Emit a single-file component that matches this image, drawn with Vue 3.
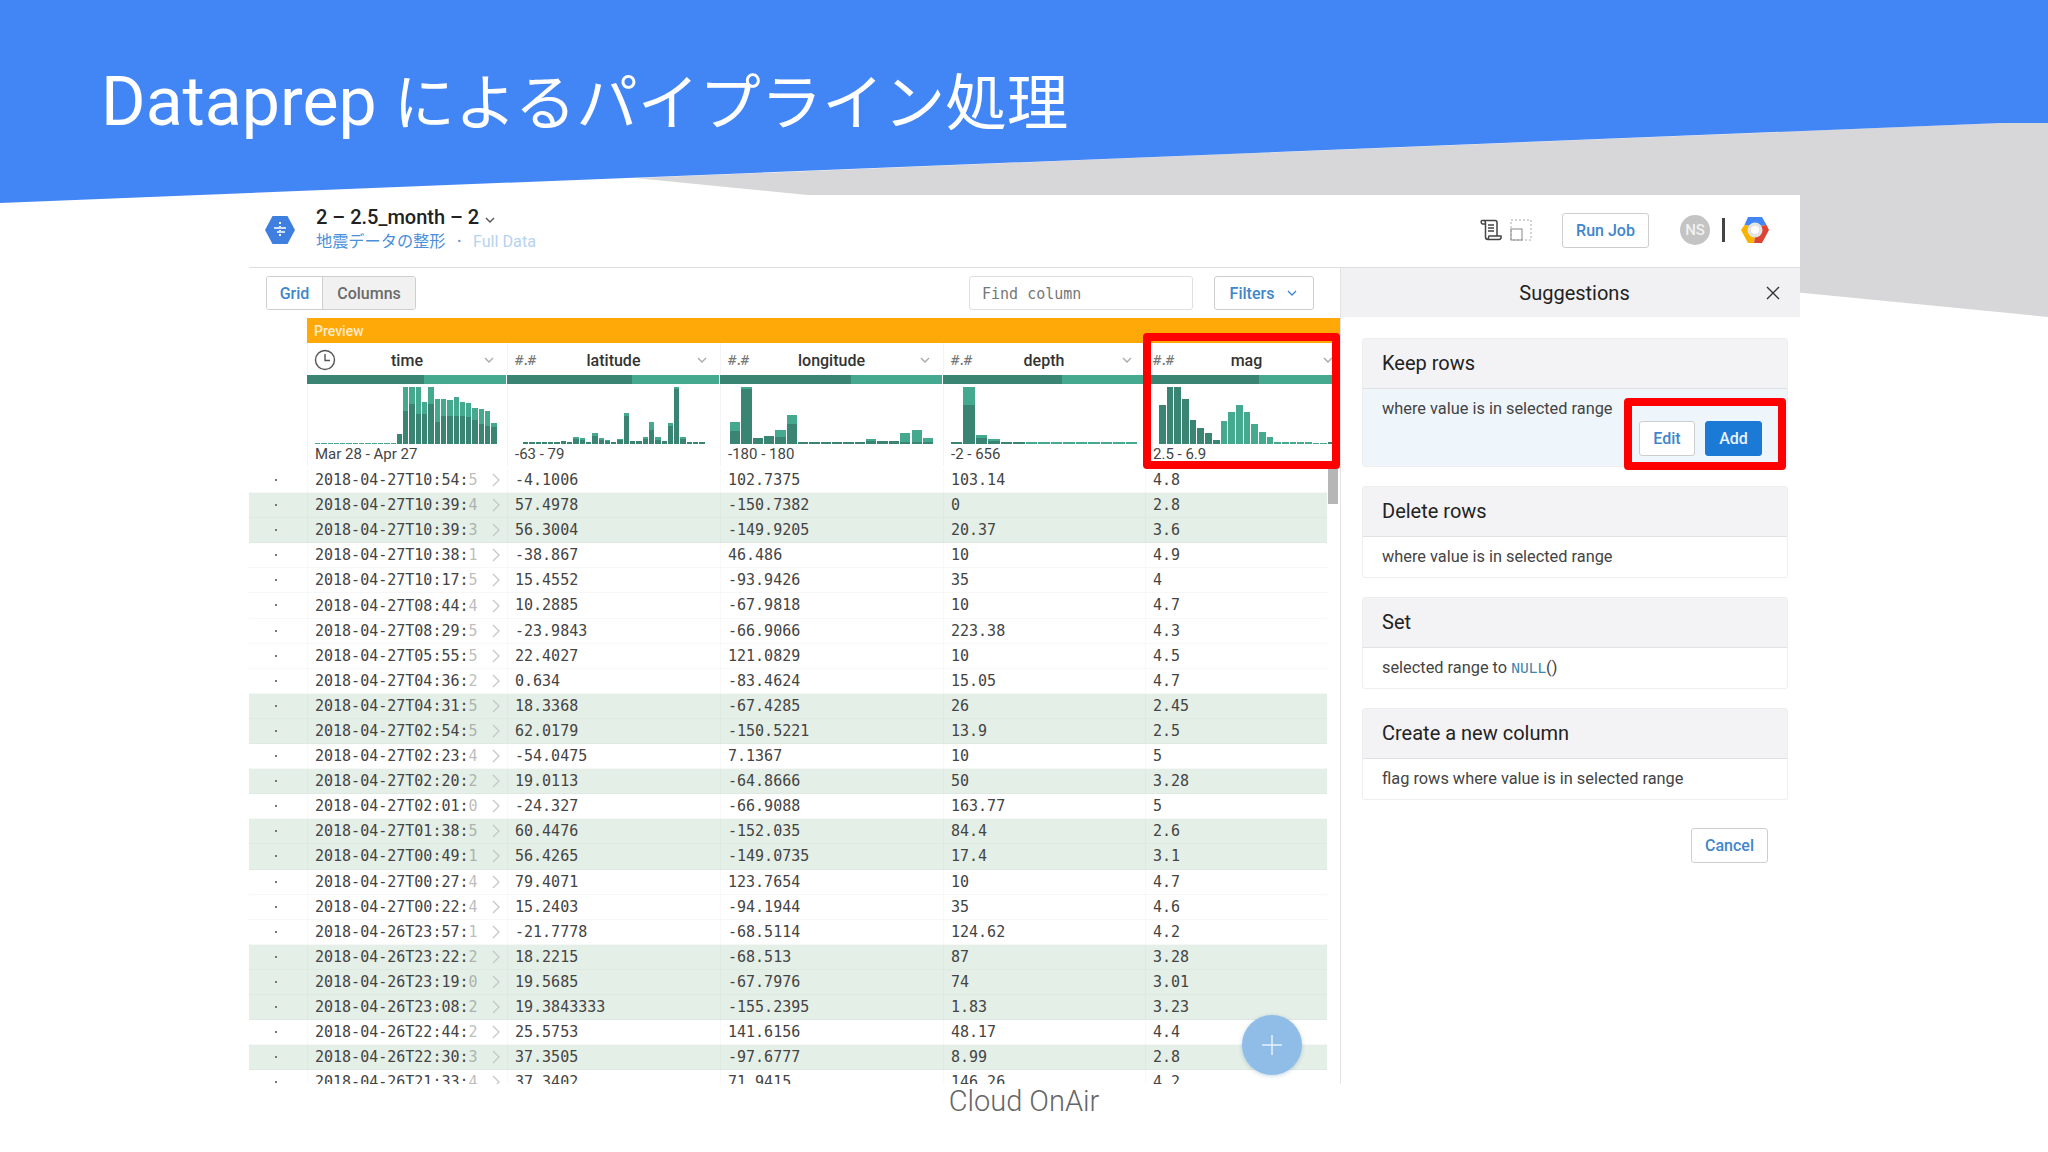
<template>
  <div class="slide">
    <svg class="backdrop" width="2048" height="1152" viewBox="0 0 2048 1152">
      <polygon points="635,178 2001,123 2048,123 2048,317" fill="#d7d7d9" />
      <polygon points="0,0 2048,0 2048,123 2001,123 0,203" fill="#4285f4" />
    </svg>

    <div class="band">
      <h1 class="slide-title"><span class="title-latin">Dataprep</span> <span class="title-ja">によるパイプライン処理</span></h1>
    </div>

    <div class="app">
      <!-- top bar -->
      <header class="topbar">
        <svg class="logo" width="30" height="28" viewBox="0 0 30 28">
          <polygon points="7.5,0 22.5,0 30,14 22.5,28 7.5,28 0,14" fill="#3f7fe0" />
          <path d="M15 6v16" stroke="#fff" stroke-width="2" stroke-dasharray="2 2" />
          <path d="M9 12h12M12 16h8" stroke="#cfe0fa" stroke-width="2" />
        </svg>
        <div class="names">
          <div class="flow-name">
            2 – 2.5_month – 2
            <svg width="12" height="8" viewBox="0 0 12 8"><path d="M2 2l4 4 4-4" class="chev" /></svg>
          </div>
          <div class="flow-sub">
            <span class="sub-link">地震データの整形</span>
            <span class="sub-dot">•</span>
            <span class="sub-scope">Full Data</span>
          </div>
        </div>
        <div class="top-actions">
          <svg width="22" height="22" viewBox="0 0 22 22" fill="none" stroke="#444" stroke-width="1.5">
            <path d="M2 1.5h13c1.5 0 2 1 2 2V17" />
            <path d="M2 1.5C.8 1.5.8 5 2.5 5H5" />
            <path d="M4 1.5c1.5 0 1.500 1.500 1.500 3V18c0 1.500 1 2.500 2.500 2.500h11c1.500 0 2.500-1.500 2-3.500H9c-.5 1-.5 2.500-1 3.500" />
            <path d="M8 6h6M8 9h6M8 12h6" />
          </svg>
          <svg class="frame-icon" width="22" height="22" viewBox="0 0 22 22" fill="none">
            <rect x="1" y="1" width="20" height="20" stroke="#aaa" stroke-dasharray="2 2" />
            <rect x="1" y="10" width="11" height="11" stroke="#888" />
          </svg>
          <button class="btn run-btn">Run Job</button>
          <div class="avatar">NS</div>
          <div class="divider"></div>
          <svg width="30" height="30" viewBox="0 0 30 30">
            <polygon points="8,2 22,2 26.500,10 20,11 15,8 10,11 4.500,10" fill="#4285f4" />
            <polygon points="4.500,10 10,11 9,18 15,22 14,28 8,28 1,15" fill="#f4b400" />
            <polygon points="26.500,10 29,15 22,28 14,28 15,22 21,18 20,11" fill="#db4437" />
            <circle cx="15" cy="15" r="7.500" fill="#e4e4e4" />
            <circle cx="15" cy="15" r="4" fill="#fff" />
          </svg>
        </div>
      </header>

      <div class="workspace">
        <!-- data grid -->
        <section class="grid-pane">
          <div class="toolbar">
            <div class="tabs">
              <button class="tab tab-on">Grid</button>
              <button class="tab">Columns</button>
            </div>
            <input class="find" placeholder="Find column" />
            <button class="btn filters-btn">
              Filters
              <svg width="12" height="8" viewBox="0 0 12 8"><path d="M2 2l4 4 4-4" class="chev chev-blue" /></svg>
            </button>
          </div>

          <div class="preview-bar">Preview</div>

          <div class="head-grid">
            <div></div>
            <div v-for="col in columns" :key="col.name" class="head-col">
              <div class="head-name">
                <svg v-if="col.name === 'time'" class="type-clock" width="22" height="22" viewBox="0 0 22 22" fill="none" stroke="#555" stroke-width="1.4">
                  <circle cx="11" cy="11" r="9.500" />
                  <path d="M11 5v6.500h5" />
                </svg>
                <span v-else class="type-mark">#.#</span>
                <span class="col-title">{{ col.name }}</span>
                <svg class="col-chev" width="12" height="8" viewBox="0 0 12 8"><path d="M2 2l4 4 4-4" class="chev chev-light" /></svg>
              </div>
              <div class="quality"><div class="quality-dark"></div></div>
              <div class="hist" :style="{ paddingLeft: col.pad + 'px', gap: col.gap + 'px' }">
                <div
                  v-for="(bar, i) in col.bars"
                  :key="i"
                  class="bar"
                  :style="{ width: col.bar + 'px', height: bar[0] + 'px' }"
                >
                  <div class="bar-dark" :style="{ height: bar[1] + 'px' }"></div>
                </div>
              </div>
              <div class="range">{{ col.range }}</div>
            </div>
          </div>

          <div class="rows">
            <div v-for="row in rows" :key="row.time" class="row" :class="{ 'row-picked': row.mag < 4 }">
              <div class="gutter"><i class="dot"></i></div>
              <div class="cell cell-time">
                <span>{{ row.time.slice(0, -1) }}<span class="fade">{{ row.time.slice(-1) }}</span></span>
                <svg width="10" height="16" viewBox="0 0 10 16" fill="none"><path d="M2 2l6 6-6 6" stroke="#c4c8c6" stroke-width="1.300" /></svg>
              </div>
              <div class="cell">{{ row.lat }}</div>
              <div class="cell">{{ row.lon }}</div>
              <div class="cell">{{ row.depth }}</div>
              <div class="cell">{{ row.mag }}</div>
            </div>
          </div>

          <div class="scroll-thumb"></div>
          <button class="fab">
            <svg width="22" height="22" viewBox="0 0 22 22"><path d="M11 1v20M1 11h20" stroke="#e8f2fb" stroke-width="1.500" /></svg>
          </button>
        </section>

        <!-- suggestions -->
        <aside class="panel">
          <div class="panel-head">
            <span class="panel-title">Suggestions</span>
            <svg width="14" height="14" viewBox="0 0 14 14"><path d="M1 1l12 12M13 1L1 13" stroke="#333" stroke-width="1.400" /></svg>
          </div>

          <div class="cards">
            <div class="card">
              <div class="card-head">Keep rows</div>
              <div class="card-body card-active">
                <span class="card-text">where value is in selected range</span>
                <div class="card-buttons">
                  <button class="btn edit-btn">Edit</button>
                  <button class="btn add-btn">Add</button>
                </div>
              </div>
              <div class="mark mark-buttons"></div>
            </div>
            <div class="card">
              <div class="card-head">Delete rows</div>
              <div class="card-body"><span class="card-text">where value is in selected range</span></div>
            </div>
            <div class="card">
              <div class="card-head">Set</div>
              <div class="card-body"><span class="card-text">selected range to <span class="fn">NULL</span>()</span></div>
            </div>
            <div class="card">
              <div class="card-head">Create a new column</div>
              <div class="card-body"><span class="card-text">flag rows where value is in selected range</span></div>
            </div>
          </div>

          <div class="panel-foot">
            <button class="btn cancel-btn">Cancel</button>
          </div>
        </aside>
      </div>

      <div class="mark mark-column"></div>
    </div>

    <footer class="credit">Cloud OnAir</footer>
  </div>
</template>

<script setup>
// each bar is [total height, dark part height]
const dashes = (n, h = 2) => Array.from({ length: n }, () => [h, h])

const columns = [
  {
    name: 'time',
    range: 'Mar 28 - Apr 27',
    pad: 8,
    bar: 5.3,
    gap: 1,
    bars: [
      ...Array.from({ length: 13 }, () => [1, 0]),
      [10, 10], [57, 33], [57, 40], [57, 30], [42, 30], [57, 40], [45, 22], [45, 28],
      [44, 28], [47, 28], [42, 28], [41, 27], [36, 24], [35, 20], [33, 18], [21, 17]
    ]
  },
  {
    name: 'latitude',
    range: '-63 - 79',
    pad: 16,
    bar: 5.3,
    gap: 1,
    bars: [
      ...dashes(6), [3, 3], [2, 2], [7, 5], [6, 4], [2, 2], [11, 8], [6, 4], [4, 3], [2, 2],
      [5, 4], [31, 28], [3, 3], [3, 3], [7, 5], [22, 14], [7, 4], [3, 3], [21, 18], [57, 55],
      [7, 5], ...dashes(3)
    ]
  },
  {
    name: 'longitude',
    range: '-180 - 180',
    pad: 10,
    bar: 10.3,
    gap: 1.05,
    bars: [
      [22, 13], [57, 55], [6, 6], [8, 8], [14, 7], [29, 20], ...dashes(6), [5, 3], [3, 3], [3, 3],
      [11, 2], [14, 2], [6, 2]
    ]
  },
  {
    name: 'depth',
    range: '-2 - 656',
    pad: 8,
    bar: 11.4,
    gap: 1.1,
    bars: [[2, 2], [57, 39], [9, 6], [5, 3], [2, 2], [2, 2], ...dashes(9).map(b => [b[0], 0])]
  },
  {
    name: 'mag',
    range: '2.5 - 6.9',
    pad: 14,
    bar: 6.7,
    gap: 1,
    bars: [
      [39, 39], [57, 57], [57, 57], [45, 45], [24, 24], [16, 16], [11, 11], [4, 4],
      [23, 0], [32, 0], [39, 0], [32, 0], [20, 0], [12, 0], [7, 0], ...dashes(5).map(b => [b[0], 0]),
      [1, 0], [1, 0], [2, 2]
    ]
  }
]

const rows = [
  { time: '2018-04-27T10:54:5', lat: '-4.1006', lon: '102.7375', depth: '103.14', mag: '4.8' },
  { time: '2018-04-27T10:39:4', lat: '57.4978', lon: '-150.7382', depth: '0', mag: '2.8' },
  { time: '2018-04-27T10:39:3', lat: '56.3004', lon: '-149.9205', depth: '20.37', mag: '3.6' },
  { time: '2018-04-27T10:38:1', lat: '-38.867', lon: '46.486', depth: '10', mag: '4.9' },
  { time: '2018-04-27T10:17:5', lat: '15.4552', lon: '-93.9426', depth: '35', mag: '4' },
  { time: '2018-04-27T08:44:4', lat: '10.2885', lon: '-67.9818', depth: '10', mag: '4.7' },
  { time: '2018-04-27T08:29:5', lat: '-23.9843', lon: '-66.9066', depth: '223.38', mag: '4.3' },
  { time: '2018-04-27T05:55:5', lat: '22.4027', lon: '121.0829', depth: '10', mag: '4.5' },
  { time: '2018-04-27T04:36:2', lat: '0.634', lon: '-83.4624', depth: '15.05', mag: '4.7' },
  { time: '2018-04-27T04:31:5', lat: '18.3368', lon: '-67.4285', depth: '26', mag: '2.45' },
  { time: '2018-04-27T02:54:5', lat: '62.0179', lon: '-150.5221', depth: '13.9', mag: '2.5' },
  { time: '2018-04-27T02:23:4', lat: '-54.0475', lon: '7.1367', depth: '10', mag: '5' },
  { time: '2018-04-27T02:20:2', lat: '19.0113', lon: '-64.8666', depth: '50', mag: '3.28' },
  { time: '2018-04-27T02:01:0', lat: '-24.327', lon: '-66.9088', depth: '163.77', mag: '5' },
  { time: '2018-04-27T01:38:5', lat: '60.4476', lon: '-152.035', depth: '84.4', mag: '2.6' },
  { time: '2018-04-27T00:49:1', lat: '56.4265', lon: '-149.0735', depth: '17.4', mag: '3.1' },
  { time: '2018-04-27T00:27:4', lat: '79.4071', lon: '123.7654', depth: '10', mag: '4.7' },
  { time: '2018-04-27T00:22:4', lat: '15.2403', lon: '-94.1944', depth: '35', mag: '4.6' },
  { time: '2018-04-26T23:57:1', lat: '-21.7778', lon: '-68.5114', depth: '124.62', mag: '4.2' },
  { time: '2018-04-26T23:22:2', lat: '18.2215', lon: '-68.513', depth: '87', mag: '3.28' },
  { time: '2018-04-26T23:19:0', lat: '19.5685', lon: '-67.7976', depth: '74', mag: '3.01' },
  { time: '2018-04-26T23:08:2', lat: '19.3843333', lon: '-155.2395', depth: '1.83', mag: '3.23' },
  { time: '2018-04-26T22:44:2', lat: '25.5753', lon: '141.6156', depth: '48.17', mag: '4.4' },
  { time: '2018-04-26T22:30:3', lat: '37.3505', lon: '-97.6777', depth: '8.99', mag: '2.8' },
  { time: '2018-04-26T21:33:4', lat: '37.3402', lon: '71.9415', depth: '146.26', mag: '4.2' }
]
</script>

<style scoped>
.slide {
  position: relative;
  width: 2048px;
  height: 1152px;
  overflow: hidden;
  background: #fff;
  font-family: Roboto, "Noto Sans CJK JP", sans-serif;
  color: #333;
}

.backdrop {
  position: absolute;
  top: 0;
  left: 0;
}

.band {
  position: relative;
  height: 195px;
  padding: 61px 0 0 101px;
  box-sizing: border-box;
}

.slide-title {
  margin: 0;
  font-size: 68px;
  font-weight: 400;
  line-height: 82px;
  color: #fff;
  white-space: nowrap;
}

.title-ja {
  font-size: 61.5px;
}

.app {
  position: relative;
  width: 1551px;
  height: 889px;
  margin-left: 249px;
  background: #fff;
  overflow: hidden;
}

.credit {
  position: relative;
  text-align: center;
  font-size: 29px;
  font-weight: 300;
  line-height: 35px;
  color: #666;
}

button {
  font-family: inherit;
  cursor: pointer;
}

.chev {
  fill: none;
  stroke: #555;
  stroke-width: 1.4;
}

.chev-blue {
  stroke: #3f86cc;
}

.chev-light {
  stroke: #aaa;
}

/* top bar */
.topbar {
  display: flex;
  align-items: center;
  height: 73px;
  padding: 0 30px 0 16px;
  border-bottom: 1px solid #dedee0;
  box-sizing: border-box;
}

.logo {
  margin: -2px 21px 0 0;
}

.names {
  margin-top: -5px;
}

.flow-name {
  margin-top: -1px;
  font-size: 20px;
  font-weight: 500;
  line-height: 26px;
  color: #222;
}

.flow-sub {
  display: flex;
  align-items: center;
  gap: 12px;
  margin-top: 1px;
  font-size: 16.2px;
  line-height: 22px;
}

.sub-link {
  color: #4a90d9;
}

.sub-dot {
  font-size: 10px;
  color: #4a90d9;
}

.sub-scope {
  color: #b6d3ef;
}

.top-actions {
  display: flex;
  align-items: center;
  margin: -2px 0 0 auto;
}

.frame-icon {
  margin-left: 8px;
}

.btn {
  height: 35px;
  padding: 0;
  border: 1px solid #ccced0;
  border-radius: 3px;
  background: #fff;
  font-size: 16px;
  font-weight: 500;
  color: #3f86cc;
}

.run-btn {
  width: 87px;
  margin: 0 31px 0 30px;
}

.avatar {
  width: 30px;
  height: 30px;
  border-radius: 50%;
  background: #c4c4c4;
  color: #f2f2f2;
  font-size: 15px;
  font-weight: 500;
  line-height: 30px;
  text-align: center;
}

.divider {
  width: 3px;
  height: 24px;
  margin: 0 15px 0 12px;
  background: #444;
}

/* grid pane */
.workspace {
  display: flex;
  height: 816px;
}

.grid-pane {
  position: relative;
  width: 1091px;
  flex: none;
  border-right: 1px solid #e4e4e6;
  box-sizing: content-box;
  overflow: hidden;
}

.toolbar {
  display: flex;
  align-items: center;
  height: 50px;
  padding: 0 26px 0 17px;
  box-sizing: border-box;
}

.tabs {
  display: flex;
  height: 34px;
  border: 1px solid #ccced0;
  border-radius: 3px;
  box-sizing: border-box;
  overflow: hidden;
}

.tab {
  width: 92px;
  padding: 0;
  border: 0;
  background: #f1f1f1;
  font-size: 16px;
  font-weight: 500;
  color: #6a6a6a;
}

.tab-on {
  width: 56px;
  border-right: 1px solid #ccced0;
  background: #fff;
  color: #3f86cc;
}

.find {
  width: 224px;
  height: 34px;
  margin-left: auto;
  padding: 2px 12px 0;
  border: 1px solid #dddfe1;
  border-radius: 3px;
  box-sizing: border-box;
  outline: none;
  font-family: "DejaVu Sans Mono", monospace;
  font-size: 15px;
}

.find::placeholder {
  color: #777;
  opacity: 1;
}

.filters-btn {
  display: flex;
  align-items: center;
  justify-content: center;
  gap: 12px;
  width: 100px;
  height: 34px;
  margin-left: 21px;
}

.preview-bar {
  height: 25px;
  margin-left: 58px;
  padding-left: 7px;
  background: #ffa908;
  color: #ffeccb;
  font-size: 14px;
  font-weight: 500;
  line-height: 27px;
}

.head-grid {
  display: grid;
  grid-template-columns: 58px 200px 213px 223px 202px 195px;
}

.head-col {
  box-sizing: border-box;
  box-shadow: inset 1px 0 0 #f4f4f4;
}

.head-name {
  position: relative;
  height: 32px;
  font-size: 16px;
  font-weight: 500;
  line-height: 36px;
  text-align: center;
  color: #333;
}

.type-mark {
  position: absolute;
  left: 8px;
  top: 0;
  font-family: "DejaVu Sans Mono", monospace;
  font-size: 14px;
  font-weight: 400;
  letter-spacing: -2px;
  line-height: 34px;
  color: #777;
}

.type-clock {
  position: absolute;
  left: 7px;
  top: 6px;
}

.col-chev {
  position: absolute;
  right: 12px;
  top: 13px;
}

.head-col:last-child .col-title {
  margin-left: 8px;
}

.head-col:last-child .col-chev {
  right: 6px;
}

.quality {
  height: 9px;
  margin-right: 1px;
  background: #45a990;
}

.quality-dark {
  width: 59%;
  height: 100%;
  background: #3a8474;
}

.hist {
  display: flex;
  align-items: flex-end;
  height: 60px;
  box-sizing: border-box;
}

.bar {
  flex: none;
  display: flex;
  align-items: flex-end;
  background: #45a990;
}

.bar-dark {
  width: 100%;
  background: #3a8474;
}

.range {
  height: 22px;
  padding-left: 8px;
  font-size: 15px;
  line-height: 21px;
  color: #444;
}

.rows {
  width: 1078px;
  margin-top: 2px;
}

.row {
  display: grid;
  grid-template-columns: 58px 200px 213px 223px 202px 182px;
  height: 25.1px;
  box-sizing: border-box;
  border-bottom: 1px solid #f6f7f6;
  font-family: "DejaVu Sans Mono", monospace;
  font-size: 15px;
  line-height: 24px;
  color: #444;
}

.row-picked {
  background: #e4efe7;
  border-bottom-color: #deeae1;
}

.gutter {
  padding-left: 26px;
}

.dot {
  display: block;
  width: 2px;
  height: 2px;
  margin-top: 11px;
  background: #777;
}

.cell {
  padding-left: 7px;
  border-left: 1px solid rgba(0, 0, 0, 0.025);
  white-space: nowrap;
  overflow: hidden;
}

.cell-time {
  display: flex;
  align-items: center;
  justify-content: space-between;
  padding-right: 6px;
}

.fade {
  opacity: 0.35;
}

.scroll-thumb {
  position: absolute;
  left: 1079px;
  top: 200px;
  width: 10px;
  height: 36px;
  background: #b6b6b6;
}

.fab {
  position: absolute;
  right: 38px;
  bottom: 9px;
  width: 60px;
  height: 60px;
  padding: 0;
  border: 0;
  border-radius: 50%;
  background: #8fbde8;
  display: flex;
  align-items: center;
  justify-content: center;
  box-shadow: 0 1px 4px rgba(70, 120, 170, 0.3);
}

/* suggestions */
.panel {
  flex: 1;
  min-width: 0;
}

.panel-head {
  display: flex;
  align-items: center;
  height: 49px;
  padding: 0 20px 0 42px;
  background: #f1f1f3;
}

.panel-title {
  flex: 1;
  font-size: 20px;
  text-align: center;
  color: #222;
}

.cards {
  display: flex;
  flex-direction: column;
  gap: 19px;
  margin: 21px 12px 0 21px;
}

.card {
  position: relative;
  border: 1px solid #eeeef0;
  border-radius: 3px;
  box-sizing: border-box;
}

.card-head {
  height: 50px;
  padding-left: 19px;
  border-bottom: 1px solid #e2e2e4;
  box-sizing: border-box;
  background: #f3f3f5;
  font-size: 20px;
  line-height: 48px;
  color: #222;
}

.card-body {
  display: flex;
  justify-content: space-between;
  min-height: 40px;
  padding-left: 19px;
  font-size: 16.35px;
  line-height: 40px;
  color: #444;
}

.card-active {
  height: 77px;
  box-sizing: border-box;
  background: #eef5fb;
  line-height: 40px;
}

.card-text {
  height: 40px;
}

.fn {
  font-family: "DejaVu Sans Mono", monospace;
  font-size: 14.5px;
  color: #3f86a8;
}

.card-buttons {
  display: flex;
  align-items: flex-end;
  gap: 10px;
  padding: 0 25px 10px 0;
}

.edit-btn {
  width: 56px;
  line-height: 33px;
}

.add-btn {
  width: 57px;
  border-color: #1a7ad6;
  background: #1a7ad6;
  color: #eaf3fc;
  line-height: 33px;
}

.mark {
  position: absolute;
  border: 8px solid #f00;
  border-radius: 4px;
  box-sizing: border-box;
}

.mark-column {
  left: 894px;
  top: 138px;
  width: 197px;
  height: 136px;
}

.mark-buttons {
  left: 261px;
  top: 59px;
  width: 162px;
  height: 72px;
}

.panel-foot {
  display: flex;
  justify-content: flex-end;
  padding: 28px 32px 0 0;
}

.cancel-btn {
  width: 77px;
}
</style>
